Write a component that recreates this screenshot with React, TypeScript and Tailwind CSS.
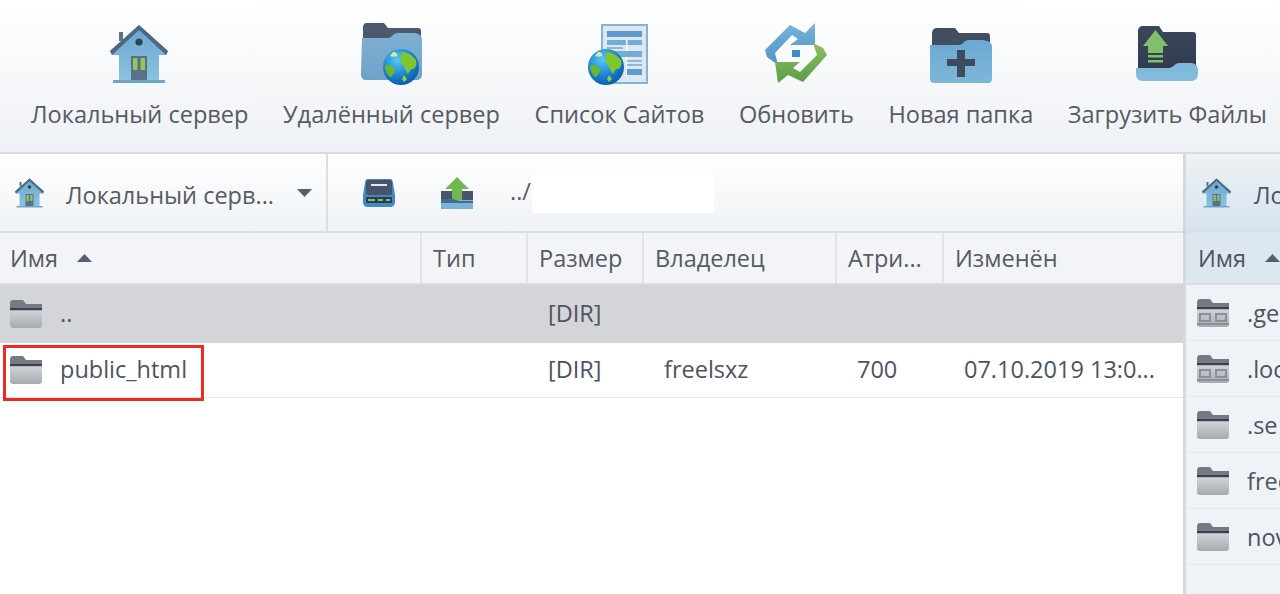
// FTP file manager: toolbar, local panel and the edge of the remote panel
import React from 'react';

const FONT = "font-['Open_Sans',sans-serif]";

function Globe({ cx, cy, r }: { cx: number; cy: number; r: number }) {
  const s = r / 18;
  return (
    <g transform={`translate(${cx} ${cy}) scale(${s})`}>
      <defs>
        <radialGradient id="sea" cx="0.4" cy="0.3" r="0.8">
          <stop offset="0" stopColor="#58c8f5" />
          <stop offset="0.55" stopColor="#1a84d2" />
          <stop offset="1" stopColor="#0b4da0" />
        </radialGradient>
      </defs>
      <circle r="18" fill="url(#sea)" />
      <path d="M1-15C6-15 11-12 15-7 16-3 15 1 12 2 10 1 9 4 7 7 5 5 4 1 2-2 0-3-1-6 0-9-1-11 0-13 1-15Z" fill="#7fc72e" />
      <path d="M-16-1C-12-3-9-2-7 1-5 3-6 6-8 7-9 10-10 11-12 9-14 7-16 3-16-1Z" fill="#69b82c" />
      <path d="M3 8L6 12 3 15 1 12Z" fill="#8fd03a" />
      <path d="M-8-15C-5-15-3-13-4-11-6-10-9-10-11-11Z" fill="#d6ea9a" />
    </g>
  );
}

function House({ size = 64 }: { size?: number }) {
  return (
    <svg width={size} height={size} viewBox="0 0 64 64" className="shrink-0">
      <defs>
        <linearGradient id="houseBody" x1="0" y1="0" x2="0" y2="1">
          <stop offset="0" stopColor="#6aa5cf" />
          <stop offset="1" stopColor="#8cc3e0" />
        </linearGradient>
      </defs>
      <path d="M11 10H15V19H11Z" fill="#5e7385" />
      <path d="M31 3L60 29 58 33 51 33V60H11V33H4L2 29Z" fill="url(#houseBody)" />
      <path d="M31 3L60 29 58 33 31 8 4 33 2 29Z" fill="#4d6880" />
      <circle cx="31" cy="20" r="3.6" fill="#2f4254" />
      <rect x="23" y="34" width="16" height="26" fill="#5b7187" />
      <rect x="25" y="36" width="4.5" height="12" fill="#93c65f" />
      <rect x="32.5" y="36" width="4.5" height="12" fill="#93c65f" />
      <rect x="5" y="58" width="52" height="3" fill="#6fa6c8" />
    </svg>
  );
}

function GlobeFolder() {
  return (
    <svg width="64" height="64" viewBox="0 0 64 64" className="shrink-0">
      <defs>
        <linearGradient id="gfBody" x1="0" y1="0" x2="0" y2="1">
          <stop offset="0" stopColor="#7fb0d2" />
          <stop offset="1" stopColor="#6ea3c8" />
        </linearGradient>
      </defs>
      <path d="M3 6C3 3 4 1 7 1H24L28 6H58C60 6 61 7 61 9V24H3Z" fill="#4d5a6e" />
      <path d="M2 16H28C32 16 33 11 38 11H54C58 11 62 14 62 17V52C62 56 60 58 56 58H6C3 58 1 56 1 52Z" fill="url(#gfBody)" />
      <Globe cx={41} cy={45} r={18} />
    </svg>
  );
}

function SiteList() {
  return (
    <svg width="64" height="64" viewBox="0 0 64 64" className="shrink-0">
      <rect x="15" y="3" width="45" height="58" fill="#dbe8f2" stroke="#86b3d3" strokeWidth="2" />
      <rect x="20" y="9" width="35" height="6" fill="#5f9ccb" />
      <rect x="20" y="18" width="35" height="5" fill="#76abd2" />
      <rect x="20" y="25" width="16" height="2" fill="#8cb8d8" />
      <rect x="39" y="18" width="1.5" height="36" fill="#ffffff" />
      <rect x="20" y="29" width="35" height="6" fill="#76abd2" />
      <rect x="40" y="38" width="15" height="2" fill="#8cb8d8" />
      <rect x="40" y="42" width="15" height="2" fill="#8cb8d8" />
      <rect x="40" y="47" width="15" height="6" fill="#5f9ccb" />
      <Globe cx={19} cy={45} r={18} />
    </svg>
  );
}

function Refresh() {
  return (
    <svg width="64" height="64" viewBox="0 0 64 64" className="shrink-0">
      <defs>
        <linearGradient id="rfBlue" x1="0" y1="0" x2="0" y2="1">
          <stop offset="0" stopColor="#79b2d9" />
          <stop offset="1" stopColor="#4f94c5" />
        </linearGradient>
        <linearGradient id="rfGreen" x1="0" y1="0" x2="0" y2="1">
          <stop offset="0" stopColor="#8dc063" />
          <stop offset="1" stopColor="#5c9c48" />
        </linearGradient>
      </defs>
      <path d="M1 28L26 3 41 11 51 1V23H26L34 17 28 13 11 31 14 43 3 35Z" fill="url(#rfBlue)" />
      <path d="M63 33L39 60 24 53 14 61 11 40H36L29 46 36 50 53 33 49 21 59 26Z" fill="url(#rfGreen)" />
      <rect x="28" y="28" width="8" height="7" fill="#3f8fc7" />
    </svg>
  );
}

function NewFolder() {
  return (
    <svg width="64" height="64" viewBox="0 0 64 64" className="shrink-0">
      <defs>
        <linearGradient id="nfBody" x1="0" y1="0" x2="0" y2="1">
          <stop offset="0" stopColor="#6aa9d2" />
          <stop offset="1" stopColor="#7fb6d9" />
        </linearGradient>
      </defs>
      <path d="M3 12C3 8 5 6 8 6H26L30 11H58C60 11 61 12 61 14V30H3Z" fill="#424d61" />
      <path d="M1 23H30C34 23 35 18 40 18H52C57 18 63 20 63 24V56C63 59 62 61 59 61H5C2 61 1 59 1 56Z" fill="url(#nfBody)" />
      <path d="M28 28H36V37H46V44H36V55H28V44H18V37H28Z" fill="#3f4a5e" />
    </svg>
  );
}

function UploadFolder() {
  return (
    <svg width="64" height="64" viewBox="0 0 64 64" className="shrink-0">
      <defs>
        <linearGradient id="ufBack" x1="0" y1="0" x2="0" y2="1">
          <stop offset="0" stopColor="#3c475b" />
          <stop offset="1" stopColor="#2f3a4e" />
        </linearGradient>
        <linearGradient id="ufFront" x1="0" y1="0" x2="0" y2="1">
          <stop offset="0" stopColor="#7cb8dd" />
          <stop offset="1" stopColor="#86bcdc" />
        </linearGradient>
      </defs>
      <path d="M3 9C3 6 5 4 8 4H24L28 10H58C60 10 61 11 61 13V50H3Z" fill="url(#ufBack)" />
      <path d="M20.5 8L33 24H28V31H13V24H8Z" fill="#7fc06c" />
      <rect x="13" y="33" width="15" height="2.5" fill="#7fc06c" />
      <rect x="13" y="38" width="15" height="2.5" fill="#7fc06c" />
      <path d="M1 46H34C38 46 40 41 44 41H56C60 41 63 44 63 48V51C63 57 60 59 56 59H8C3 59 1 56 1 51Z" fill="url(#ufFront)" />
    </svg>
  );
}

function Drive() {
  return (
    <svg width="32" height="28" viewBox="0 0 32 28" className="shrink-0">
      <path d="M5 0H27C29 0 30 2 30 4L32 16V23C32 26 30 28 27 28H5C2 28 0 26 0 23V16L2 4C2 2 3 0 5 0Z" fill="#3f8ac3" />
      <rect x="3" y="1" width="26" height="15" rx="2" fill="#47536a" />
      <rect x="8" y="5" width="16" height="2" fill="#e3e7ec" />
      <rect x="3" y="18" width="26" height="6" rx="1" fill="#2f3c50" />
      <path d="M5 21H12M15 21H20M23 21H27" stroke="#7fc06c" strokeWidth="2" />
    </svg>
  );
}

function UpSmall() {
  return (
    <svg width="32" height="32" viewBox="0 0 32 32" className="shrink-0">
      <path d="M0 14H32V24H0Z" fill="#4a556a" />
      <path d="M16 0L28 12H21V23H11V12H4Z" fill="#6fb84f" />
      <path d="M0 23H32V32H0Z" fill="#7cb4d8" />
      <path d="M0 22H11C14 22 16 24 20 24H32V26H0Z" fill="#3f6f96" />
    </svg>
  );
}

function SmallFolder({ network = false }: { network?: boolean }) {
  return (
    <svg width="32" height="28" viewBox="0 0 32 28" className="shrink-0">
      <defs>
        <linearGradient id="sfBody" x1="0" y1="0" x2="0" y2="1">
          <stop offset="0" stopColor="#d0d2d6" />
          <stop offset="1" stopColor="#a6aab0" />
        </linearGradient>
      </defs>
      <path d="M0 4C0 1 1 0 3 0H13L16 4H32V9H0Z" fill="#757a85" />
      <rect x="0" y="8" width="32" height="2.5" fill="#3a404e" />
      <path d="M0 10.5H32V25C32 27 31 28 29 28H3C1 28 0 27 0 25Z" fill="url(#sfBody)" />
      {network && (
        <g fill="none" stroke="#8b8f97" strokeWidth="2">
          <rect x="3" y="15" width="10" height="7" />
          <rect x="19" y="15" width="10" height="7" />
          <path d="M0 25H32" />
        </g>
      )}
    </svg>
  );
}

function Caret({ up = false }: { up?: boolean }) {
  return (
    <svg width="15" height="8" viewBox="0 0 15 8" className="shrink-0">
      <path d={up ? 'M7.5 0L15 8H0Z' : 'M0 0H15L7.5 8Z'} fill="#565d6e" />
    </svg>
  );
}

const TOOLS = [
  { label: 'Локальный сервер', icon: <House /> },
  { label: 'Удалённый сервер', icon: <GlobeFolder /> },
  { label: 'Список Сайтов', icon: <SiteList /> },
  { label: 'Обновить', icon: <Refresh /> },
  { label: 'Новая папка', icon: <NewFolder /> },
  { label: 'Загрузить Файлы', icon: <UploadFolder /> },
];

const COLUMNS = [
  { label: 'Имя', width: 'w-[422px] pl-[10px]' },
  { label: 'Тип', width: 'w-[106px] pl-[11px]' },
  { label: 'Размер', width: 'w-[116px] pl-[11px]' },
  { label: 'Владелец', width: 'w-[193px] pl-[11px]' },
  { label: 'Атри...', width: 'w-[107px] pl-[11px]' },
  { label: 'Изменён', width: 'flex-1 pl-[11px]' },
];

const REMOTE = [
  { name: '.ge', network: true },
  { name: '.loc', network: true },
  { name: '.se', network: false },
  { name: 'free', network: false },
  { name: 'nov', network: false },
];

export default function App() {
  return (
    <div className={`${FONT} h-screen w-full overflow-hidden bg-white flex flex-col text-[#555a63]`}>
      <div className="h-[154px] shrink-0 flex gap-[34.6px] pl-[31px] pt-[22px] border-b-2 border-[#d9dbde] bg-gradient-to-b from-white to-[#eef1f5] whitespace-nowrap">
        {TOOLS.map(t => (
          <div key={t.label} className="flex flex-col items-center">
            {t.icon}
            <span className="text-[23.55px] leading-[30px] mt-[13px]">{t.label}</span>
          </div>
        ))}
      </div>

      <div className="flex-1 flex min-h-0">
        <div className="w-[1183px] shrink-0 flex flex-col">
          <div className="h-[79px] shrink-0 flex border-b-2 border-[#dcdee1] bg-gradient-to-b from-white to-[#eff2f5]">
            <div className="w-[328px] shrink-0 flex items-center border-r-2 border-[#dcdee1] pl-[14px]">
              <House size={32} />
              <span className="text-[23.5px] ml-[20px] w-[231px] whitespace-nowrap pt-[7px]">Локальный серв...</span>
              <Caret />
            </div>
            <div className="flex-1 flex items-center pl-[35px]">
              <Drive />
              <div className="ml-[46px]"><UpSmall /></div>
              <span className="text-[23.5px] ml-[37px] pb-[2px]">../</span>
              <div className="ml-[1px] w-[182px] h-[40px] bg-white" />
            </div>
          </div>

          <div className="h-[52px] shrink-0 flex border-b-2 border-[#dcdee1] bg-[#f2f4f7] text-[23.5px]">
            {COLUMNS.map((c, i) => (
              <div key={c.label} className={`${c.width} flex items-center pr-[10px] gap-[19px] border-r-2 border-[#e1e3e6] last:border-r-0`}>
                <span className="whitespace-nowrap pt-[2px]">{c.label}</span>
                {i === 0 && <Caret up />}
              </div>
            ))}
          </div>

          <div className="h-[58px] shrink-0 flex items-center bg-[#d4d5d9] text-[23.5px] text-[#4d5362] pl-[10px]">
            <SmallFolder />
            <span className="w-[488px] ml-[18px]">..</span>
            <span>[DIR]</span>
          </div>

          <div className="relative h-[55px] shrink-0 flex items-center border-b border-[#e3e5e8] text-[23.5px] text-[#4d5362] pl-[10px]">
            <SmallFolder />
            <span className="w-[488px] ml-[18px] pb-[1px]">public_html</span>
            <span className="w-[116px] pb-[1px]">[DIR]</span>
            <span className="w-[193px] pb-[1px]">freelsxz</span>
            <span className="w-[107px] pb-[1px]">700</span>
            <span className="whitespace-nowrap pb-[1px]">07.10.2019 13:0...</span>
            <div className="absolute left-[3px] top-[2px] w-[201px] h-[56px] border-[3px] border-[#ee2b22]" />
          </div>
        </div>

        <div className="flex-1 flex flex-col min-w-0 overflow-hidden border-l-[3px] border-[#d6d8dc] bg-[#eff2f6] whitespace-nowrap text-[23.5px] text-[#4d5362]">
          <div className="h-[79px] shrink-0 flex items-center pl-[15px] gap-[21px] border-b-2 border-[#dcdee1] bg-gradient-to-b from-[#eef1f5] to-[#d6e4f0]">
            <House size={32} />
            <span className="pt-[7px]">Локальный</span>
          </div>
          <div className="h-[52px] shrink-0 flex items-center pl-[12px] gap-[19px] border-b-2 border-[#d8dde3] bg-[#dde7f0]">
            <span className="pt-[2px]">Имя</span>
            <Caret up />
          </div>
          {REMOTE.map(r => (
            <div key={r.name} className="h-[56px] shrink-0 flex items-center pl-[11px] gap-[18px] border-b border-[#e6e9ed]">
              <SmallFolder network={r.network} />
              <span className="pt-[2px]">{r.name}</span>
            </div>
          ))}
        </div>
      </div>
    </div>
  );
}
